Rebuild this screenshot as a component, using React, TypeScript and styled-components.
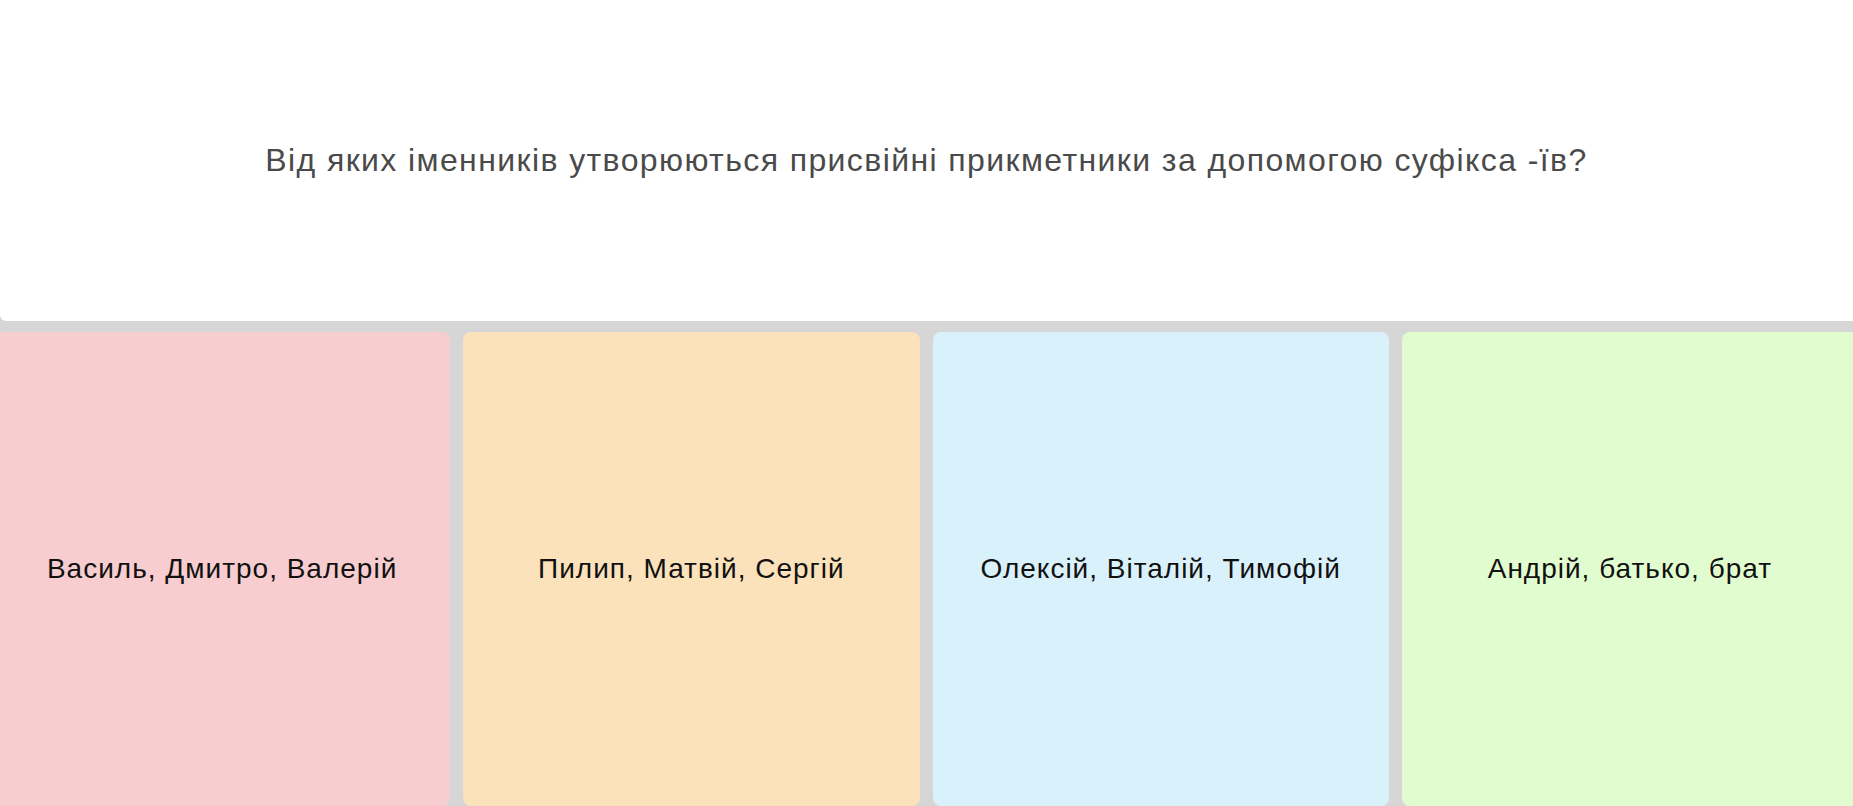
import styled, { createGlobalStyle } from 'styled-components';

const GlobalStyle = createGlobalStyle`
  html, body {
    margin: 0;
    padding: 0;
    background-color: #d6d6d6;
    overflow: hidden;
  }

  body {
    font-family: "Liberation Sans", Arial, sans-serif;
  }
`;

type Answer = {
  text: string;
  color: string;
};

const answers: Answer[] = [
  { text: 'Василь, Дмитро, Валерій', color: '#f7cdcf' },
  { text: 'Пилип, Матвій, Сергій', color: '#fbe2bb' },
  { text: 'Олексій, Віталій, Тимофій', color: '#d9f1fb' },
  { text: 'Андрій, батько, брат', color: '#e1fdd0' },
];

const App = () => {
  return (
    <>
      <GlobalStyle />
      <Page>
        <QuestionPanel>
          <QuestionText>
            Від яких іменників утворюються присвійні прикметники за допомогою
            суфікса -їв?
          </QuestionText>
        </QuestionPanel>
        <AnswerGrid>
          {answers.map((answer) => (
            <AnswerCard key={answer.text} $color={answer.color}>
              {answer.text}
            </AnswerCard>
          ))}
        </AnswerGrid>
      </Page>
    </>
  );
};

export default App;

const Page = styled.div`
  display: flex;
  flex-direction: column;
  gap: 11px;
  height: 100vh;
`;

const QuestionPanel = styled.div`
  height: 321px;
  flex-shrink: 0;
  display: flex;
  align-items: center;
  justify-content: center;
  background-color: #ffffff;
  border-radius: 0 0 0 6px;
`;

const QuestionText = styled.h1`
  margin: 0;
  font-size: 32px;
  font-weight: 400;
  letter-spacing: 1.4px;
  color: #4a4a4a;
  text-align: center;
`;

const AnswerGrid = styled.div`
  flex: 1;
  display: grid;
  grid-template-columns: repeat(4, 1fr);
  gap: 13px;
  margin: 0 -5px 0 -6px;
`;

const AnswerCard = styled.div<{ $color: string }>`
  display: flex;
  align-items: center;
  justify-content: center;
  background-color: ${({ $color }) => $color};
  border-radius: 8px;
  font-size: 28px;
  letter-spacing: 1px;
  color: #111111;
  text-align: center;
  padding: 0 16px;
`;
